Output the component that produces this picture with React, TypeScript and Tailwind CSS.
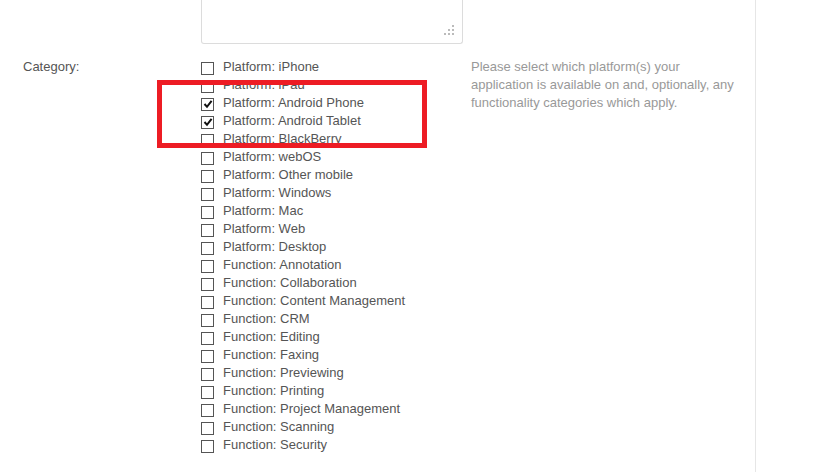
import type { FC } from 'react';

const options: { label: string; checked?: boolean }[] = [
  { label: 'Platform: iPhone' },
  { label: 'Platform: iPad' },
  { label: 'Platform: Android Phone', checked: true },
  { label: 'Platform: Android Tablet', checked: true },
  { label: 'Platform: BlackBerry' },
  { label: 'Platform: webOS' },
  { label: 'Platform: Other mobile' },
  { label: 'Platform: Windows' },
  { label: 'Platform: Mac' },
  { label: 'Platform: Web' },
  { label: 'Platform: Desktop' },
  { label: 'Function: Annotation' },
  { label: 'Function: Collaboration' },
  { label: 'Function: Content Management' },
  { label: 'Function: CRM' },
  { label: 'Function: Editing' },
  { label: 'Function: Faxing' },
  { label: 'Function: Previewing' },
  { label: 'Function: Printing' },
  { label: 'Function: Project Management' },
  { label: 'Function: Scanning' },
  { label: 'Function: Security' },
];

const Checkbox: FC<{ checked?: boolean }> = ({ checked }) => (
  <span className="mt-[2px] flex h-[13px] w-[13px] shrink-0 items-center justify-center border border-[#555] bg-white">
    {checked && (
      <svg width="10" height="10" viewBox="0 0 10 10">
        <path d="M1.5 5 L4 7.8 L8.6 1.8" fill="none" stroke="#111" strokeWidth="2" />
      </svg>
    )}
  </span>
);

const ResizeGrip: FC = () => (
  <svg width="12" height="12" viewBox="0 0 12 12" className="absolute bottom-[7px] right-[7px]">
    <rect x="9" y="1" width="2" height="2" fill="#bbb" />
    <rect x="5" y="5" width="2" height="2" fill="#bbb" />
    <rect x="9" y="5" width="2" height="2" fill="#bbb" />
    <rect x="1" y="9" width="2" height="2" fill="#bbb" />
    <rect x="5" y="9" width="2" height="2" fill="#bbb" />
    <rect x="9" y="9" width="2" height="2" fill="#bbb" />
  </svg>
);

export default function App() {
  return (
    <div className="relative h-[472px] w-[818px] overflow-hidden bg-white font-['Liberation_Sans',Arial,sans-serif] text-[13px] text-[#555]">
      <div className="h-full w-[756px] border-r border-[#e6e6e6]">
        {/* textarea tail */}
        <div className="pl-[201px]">
          <div className="relative h-[44px] w-[262px] rounded-b-[3px] border border-t-0 border-[#dcdcdc]">
            <ResizeGrip />
          </div>
        </div>

        {/* category row */}
        <div className="mt-[14px] flex">
          <div className="w-[201px] pl-[23px] leading-[18px]">Category:</div>
          <div className="flex w-[270px] flex-col">
            {options.map((o) => (
              <label key={o.label} className="flex h-[18px] items-center gap-[9px] leading-[18px]">
                <Checkbox checked={o.checked} />
                <span>{o.label}</span>
              </label>
            ))}
          </div>
          <p className="w-[268px] leading-[18px] text-[#999]">
            Please select which platform(s) your application is available on and, optionally, any
            functionality categories which apply.
          </p>
        </div>
      </div>

      {/* annotation */}
      <div className="pointer-events-none absolute left-[157px] top-[80px] h-[68px] w-[270px] border-[5px] border-[#ed1c24]" />
    </div>
  );
}
